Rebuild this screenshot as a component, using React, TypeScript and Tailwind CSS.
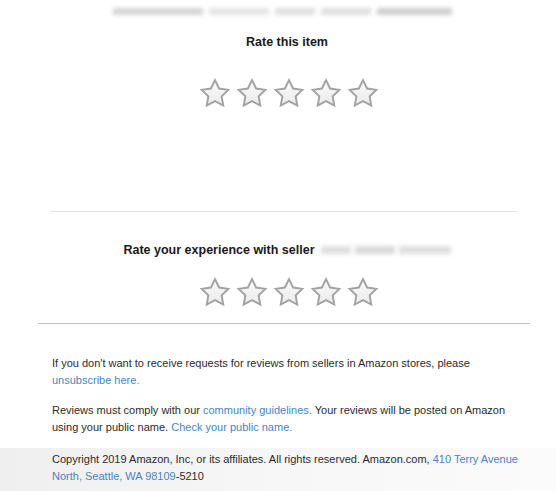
import React from "react";

function Star() {
  return (
    <svg width="32" height="31" viewBox="0 0 24 23" className="shrink-0">
      <defs>
        <linearGradient id="starFill" x1="0" y1="0" x2="0" y2="1">
          <stop offset="0%" stopColor="#fbfbfb" />
          <stop offset="100%" stopColor="#eaeaea" />
        </linearGradient>
      </defs>
      <path
        d="M12 1.5l3.09 6.26 6.91 1.01-5 4.87 1.18 6.88L12 17.27l-6.18 3.25L7 13.64 2 8.77l6.91-1.01L12 1.5z"
        fill="url(#starFill)"
        stroke="#a2a2a2"
        strokeWidth="1.45"
        strokeLinejoin="miter"
      />
    </svg>
  );
}

function StarRow() {
  return (
    <div className="flex justify-center gap-[5px] pl-[9px]">
      {[0, 1, 2, 3, 4].map((i) => (
        <Star key={i} />
      ))}
    </div>
  );
}

// blurred strip standing in for hidden product / seller names
function Blurred({ className }: { className: string }) {
  return <div className={"bg-[#c9c9c9] blur-[2px] " + className} />;
}

export default function App() {
  const link = "text-[#4a84c2]";

  return (
    <div
      className="w-[556px] h-[491px] bg-white overflow-hidden text-[#2b2b2b]"
      style={{ fontFamily: '"Liberation Sans", Arial, sans-serif' }}
    >
      {/* Top blurred product title */}
      <div className="h-[20px] flex justify-center items-center gap-[6px] pt-[2px] pl-[8px]">
        <Blurred className="w-[90px] h-[7px] opacity-80" />
        <Blurred className="w-[60px] h-[7px] opacity-50" />
        <Blurred className="w-[40px] h-[7px] opacity-60" />
        <Blurred className="w-[50px] h-[7px] opacity-60" />
        <Blurred className="w-[75px] h-[7px] opacity-90" />
      </div>

      <div className="ml-[38px] w-[492px]">
        <p className="mt-[15px] text-center text-[12.5px] font-bold leading-[14px] text-[#1a1a1a] pl-[6px]">
          Rate this item
        </p>

        <div className="mt-[29px]">
          <StarRow />
        </div>

        <div className="mt-[102px] ml-[12px] mr-[13px] h-px bg-[#e4e4e4]" />

        <p className="mt-[31px] flex justify-center items-center gap-[6px] text-[12.5px] font-bold leading-[14px] text-[#1a1a1a] pl-[6px]">
          <span>Rate your experience with seller</span>
          <span className="flex gap-[4px] items-center">
            <Blurred className="w-[30px] h-[8px] opacity-60" />
            <Blurred className="w-[40px] h-[8px] opacity-70" />
            <Blurred className="w-[52px] h-[8px] opacity-60" />
          </span>
        </p>

        <div className="mt-[20px]">
          <StarRow />
        </div>

        <div className="mt-[15px] h-px bg-[#bdbdbd]" />

        <div className="pl-[14px] text-[11px] leading-[17px]">
          <p className="mt-[31px]">
            If you don't want to receive requests for reviews from sellers in Amazon stores, please{" "}
            <span className={link}>unsubscribe here.</span>
          </p>
          <p className="mt-[13px]">
            Reviews must comply with our <span className={link}>community guidelines.</span> Your reviews
            will be posted on Amazon using your public name.{" "}
            <span className={link}>Check your public name.</span>
          </p>
        </div>
      </div>

      {/* Footer band with soft shade */}
      <div className="mt-[12px] h-[60px] bg-gradient-to-r from-[#efefef] via-[#f7f7f7] to-[#fbfbfb]">
        <p className="pl-[52px] pr-[30px] pt-[3px] text-[11px] leading-[17px]">
          Copyright 2019 Amazon, Inc, or its affiliates. All rights reserved. Amazon.com,{" "}
          <span className={link}>410 Terry Avenue North, Seattle, WA 98109</span>-5210
        </p>
      </div>
    </div>
  );
}
